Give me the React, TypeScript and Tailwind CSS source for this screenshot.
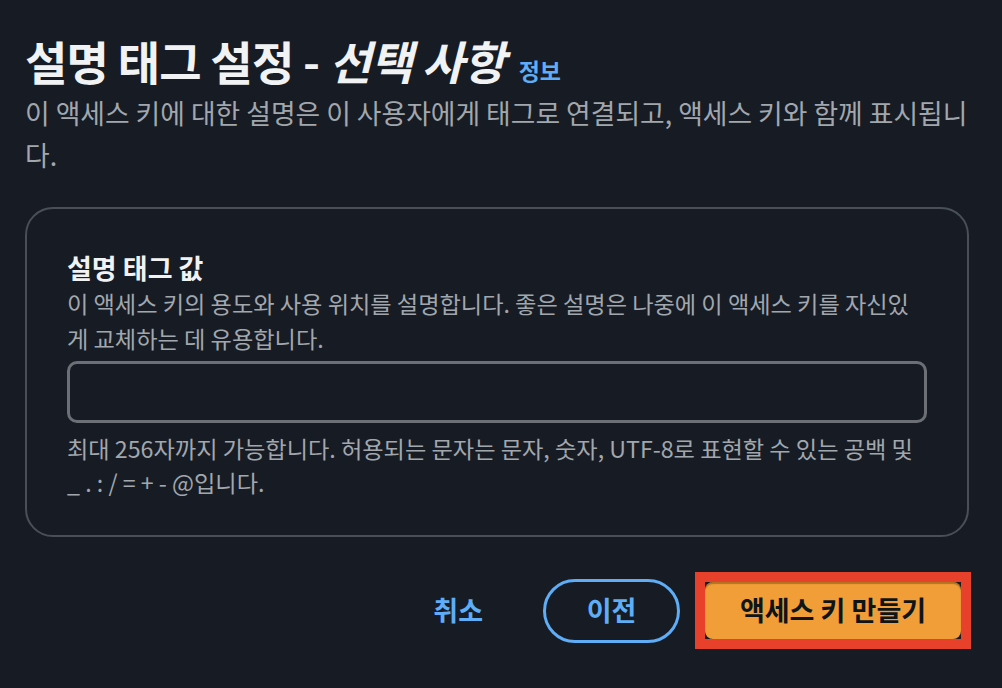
export default function App() {
  const font = { fontFamily: '"Noto Sans CJK KR", "Noto Sans", sans-serif' };

  return (
    <div className="w-[1002px] h-[688px] overflow-hidden bg-[#171c24] pl-[25px] pr-[33px] pt-[32px]" style={font}>
      <div className="flex items-baseline gap-[14px]">
        <h1 className="text-[46px] leading-[56px] font-bold text-[#f1f2f3] tracking-[-0.8px]">
          설명 태그 설정 - <span className="italic">선택 사항</span>
        </h1>
        <a className="text-[23px] font-bold text-[#5eadf6]">정보</a>
      </div>
      <p className="mt-[4px] text-[26.8px] leading-[42px] text-[#a2a7ae]">
        이 액세스 키에 대한 설명은 이 사용자에게 태그로 연결되고, 액세스 키와 함께 표시됩니다.
      </p>

      <div className="mt-[31px] rounded-[28px] border-2 border-[#4a4f57] px-[40px] pt-[41px] pb-[36px]">
        <div className="text-[27px] leading-[36px] font-bold text-[#f1f2f3]">설명 태그 값</div>
        <p className="text-[23.2px] leading-[35px] text-[#a2a7ae]">
          이 액세스 키의 용도와 사용 위치를 설명합니다. 좋은 설명은 나중에 이 액세스 키를 자신있
          <br />
          게 교체하는 데 유용합니다.
        </p>
        <input
          className="mt-[5px] block h-[62px] w-full rounded-[10px] border-[3px] border-[#6c6f76] bg-transparent px-4 text-[20px] text-white outline-none"
          type="text"
        />
        <p className="mt-[8px] text-[23.2px] leading-[34px] text-[#a2a7ae]">
          최대 256자까지 가능합니다. 허용되는 문자는 문자, 숫자, UTF-8로 표현할 수 있는 공백 및
          <br />
          _ . : / = + - @입니다.
        </p>
      </div>

      <div className="mt-[35px] flex items-center justify-end">
        <button className="mr-[60px] text-[27px] font-bold text-[#5eadf6]">취소</button>
        <button className="h-[64px] w-[137px] rounded-full border-[3px] border-[#5eadf6] text-[27px] font-bold text-[#5eadf6]">
          이전
        </button>
        <div className="ml-[15px] mr-[-2px] border-[10px] border-[#e8412b] bg-[#171c24]">
          <button className="flex h-[57px] w-[256px] items-center justify-center rounded-[8px] bg-[#f29e38] text-[27px] font-bold text-[#0f1419] shadow-[inset_0_2px_1px_rgba(120,70,10,0.5)]">
            액세스 키 만들기
          </button>
        </div>
      </div>
    </div>
  );
}
